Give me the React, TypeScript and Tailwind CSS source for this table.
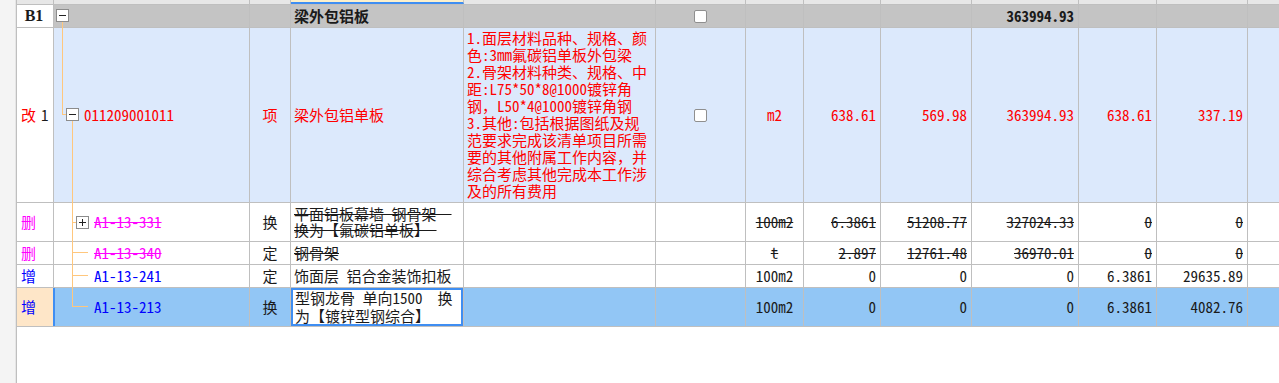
import React from 'react';
import clsx from 'clsx';

const W = [
  'w-[37px]',
  'w-[196px]',
  'w-[41px]',
  'w-[173px]',
  'w-[192px]',
  'w-[90px]',
  'w-[58px]',
  'w-[77px]',
  'w-[91px]',
  'w-[107px]',
  'w-[78px]',
  'w-[91px]',
  'w-[80px]',
];

function C({ i, className = '', children }: { i: number; className?: string; children?: React.ReactNode }) {
  return (
    <div className={clsx('relative shrink-0 h-full border-r border-[#bfbfbf] flex items-center', W[i], className)}>
      {children}
    </div>
  );
}

function Box({ plus = false, className = '' }: { plus?: boolean; className?: string }) {
  return (
    <span className={clsx('absolute w-[13px] h-[13px] border border-[#8c8c8c] bg-white', className)}>
      <span className="absolute left-[2px] top-[5px] w-[7px] h-px bg-[#222]" />
      {plus && <span className="absolute left-[5px] top-[2px] w-px h-[7px] bg-[#222]" />}
    </span>
  );
}

function Check() {
  return <span className="w-[13px] h-[13px] rounded-[2px] border border-[#8f8f8f] bg-white" />;
}

const line = 'absolute bg-[#ffc77d]';

function Num({ i, v, strike = false, className = '' }: { i: number; v: string; strike?: boolean; className?: string }) {
  return (
    <C i={i} className={clsx('justify-end pr-[4px]', className)}>
      <span className={clsx(strike && 'line-through')}>{v}</span>
    </C>
  );
}

function Rest({ from, vals, strike = false, className = '' }: { from: number; vals: string[]; strike?: boolean; className?: string }) {
  return (
    <>
      {vals.map((v, k) => (
        <Num key={k} i={from + k} v={v} strike={strike} className={className} />
      ))}
    </>
  );
}

export default function App() {
  return (
    <div className="flex h-[383px] w-full overflow-hidden bg-white text-[15px] text-[#1a1a1a] font-['Noto_Sans_Mono_CJK_SC','Noto_Sans_CJK_SC',monospace]">
      <div className="w-[16px] shrink-0 bg-[#f4f4f4] border-r border-[#e6e6e6]" />
      <div className="flex flex-col shrink-0 border-l border-[#bfbfbf]">
        {/* header stub */}
        <div className="flex h-[5px] border-b border-[#bfbfbf] bg-[#e7e7e7]">
          <C i={0} />
          <C i={1} />
          <C i={2} />
          <C i={3} className="bg-[#fcf0cc] border-b-2 border-b-[#3f8ef2]" />
          <C i={4} />
          <C i={5} />
          <C i={6} />
          <C i={7} />
          <C i={8} />
          <C i={9} />
          <C i={10} />
          <C i={11} />
          <C i={12} />
        </div>

        {/* B1 group */}
        <div className="flex h-[23px] border-b border-[#bfbfbf] bg-[#c4c4c4] font-bold">
          <C i={0} className="justify-center bg-white pr-[2px] text-[16px] font-['Liberation_Serif',serif]">B1</C>
          <C i={1}>
            <Box className="left-[2px] top-[4px]" />
            <span className={clsx(line, 'left-[8px] top-[17px] w-px h-[7px]')} />
          </C>
          <C i={2} />
          <C i={3} className="pl-[3px]">梁外包铝板</C>
          <C i={4} />
          <C i={5} className="justify-center">
            <Check />
          </C>
          <C i={6} />
          <C i={7} />
          <C i={8} />
          <Num i={9} v="363994.93" />
          <C i={10} />
          <C i={11} />
          <C i={12} />
        </div>

        {/* 改 1 */}
        <div className="flex h-[175px] border-b border-[#bfbfbf] bg-[#dce9fc] text-[#ff0000]">
          <C i={0} className="bg-white pl-[4px]">
            改<span className="ml-[5px] text-[#1a1a1a]">1</span>
          </C>
          <C i={1}>
            <span className={clsx(line, 'left-[8px] top-0 w-px h-[87px]')} />
            <span className={clsx(line, 'left-[8px] top-[86px] w-[4px] h-px')} />
            <Box className="left-[12px] top-[80px]" />
            <span className={clsx(line, 'left-[18px] top-[93px] w-px h-[82px]')} />
            <span className="pl-[30px]">011209001011</span>
          </C>
          <C i={2} className="justify-center">项</C>
          <C i={3} className="pl-[3px]">梁外包铝单板</C>
          <C i={4} className="items-start pl-[3px] pt-[1px] leading-[17px] whitespace-pre">
            {'1.面层材料品种、规格、颜\n色:3mm氟碳铝单板外包梁\n2.骨架材料种类、规格、中\n距:L75*50*8@1000镀锌角\n钢，L50*4@1000镀锌角钢\n3.其他:包括根据图纸及规\n范要求完成该清单项目所需\n要的其他附属工作内容，并\n综合考虑其他完成本工作涉\n及的所有费用'}
          </C>
          <C i={5} className="justify-center">
            <Check />
          </C>
          <C i={6} className="justify-center">m2</C>
          <Rest from={7} vals={['638.61', '569.98', '363994.93', '638.61', '337.19']} />
          <C i={12} />
        </div>

        {/* 删 A1-13-331 */}
        <div className="flex h-[39px] border-b border-[#bfbfbf]">
          <C i={0} className="pl-[4px] text-[#ff00ff]">删</C>
          <C i={1}>
            <span className={clsx(line, 'left-[18px] top-0 w-px h-[39px]')} />
            <span className={clsx(line, 'left-[18px] top-[19px] w-[4px] h-px')} />
            <Box plus className="left-[22px] top-[13px]" />
            <span className="pl-[40px] text-[#ff00ff] line-through">A1-13-331</span>
          </C>
          <C i={2} className="justify-center">换</C>
          <C i={3} className="pl-[3px] leading-[16px] whitespace-pre line-through">
            {'平面铝板幕墙 钢骨架  \n换为【氟碳铝单板】 '}
          </C>
          <C i={4} />
          <C i={5} />
          <C i={6} className="justify-center">
            <span className="line-through">100m2</span>
          </C>
          <Rest from={7} vals={['6.3861', '51208.77', '327024.33', '0', '0']} strike />
          <C i={12} />
        </div>

        {/* 删 A1-13-340 */}
        <div className="flex h-[23px] border-b border-[#bfbfbf]">
          <C i={0} className="pl-[4px] text-[#ff00ff]">删</C>
          <C i={1}>
            <span className={clsx(line, 'left-[18px] top-0 w-px h-[23px]')} />
            <span className={clsx(line, 'left-[18px] top-[10px] w-[16px] h-px')} />
            <span className="pl-[40px] text-[#ff00ff] line-through">A1-13-340</span>
          </C>
          <C i={2} className="justify-center">定</C>
          <C i={3} className="pl-[3px]">
            <span className="line-through">钢骨架</span>
          </C>
          <C i={4} />
          <C i={5} />
          <C i={6} className="justify-center">
            <span className="line-through">t</span>
          </C>
          <Rest from={7} vals={['2.897', '12761.48', '36970.01', '0', '0']} strike />
          <C i={12} />
        </div>

        {/* 增 A1-13-241 */}
        <div className="flex h-[23px] border-b border-[#bfbfbf]">
          <C i={0} className="pl-[4px] text-[#0000ff]">增</C>
          <C i={1}>
            <span className={clsx(line, 'left-[18px] top-0 w-px h-[23px]')} />
            <span className={clsx(line, 'left-[18px] top-[10px] w-[16px] h-px')} />
            <span className="pl-[40px] text-[#0000ff]">A1-13-241</span>
          </C>
          <C i={2} className="justify-center">定</C>
          <C i={3} className="pl-[3px] whitespace-pre">饰面层 铝合金装饰扣板</C>
          <C i={4} />
          <C i={5} />
          <C i={6} className="justify-center">100m2</C>
          <Rest from={7} vals={['0', '0', '0', '6.3861', '29635.89']} />
          <C i={12} />
        </div>

        {/* 增 A1-13-213 (selected) */}
        <div className="flex h-[39px] border-b border-[#bfbfbf] bg-[#92c6f5]">
          <C i={0} className="pl-[4px] text-[#0000ff] bg-[#fee6c8] border-r-[#3f8ef2]">增</C>
          <C i={1} className="shadow-[inset_1px_0_0_#3f8ef2]">
            <span className={clsx(line, 'left-[18px] top-0 w-px h-[18px]')} />
            <span className={clsx(line, 'left-[18px] top-[18px] w-[16px] h-px')} />
            <span className="pl-[40px] text-[#0000ff]">A1-13-213</span>
          </C>
          <C i={2} className="justify-center">换</C>
          <C i={3} className="pl-[4px] leading-[18px] whitespace-pre bg-white shadow-[inset_0_0_0_2px_#3f8ef2]">
            {'型钢龙骨 单向1500  换\n为【镀锌型钢综合】'}
          </C>
          <C i={4} />
          <C i={5} />
          <C i={6} className="justify-center">100m2</C>
          <Rest from={7} vals={['0', '0', '0', '6.3861', '4082.76']} />
          <C i={12} />
        </div>
      </div>
    </div>
  );
}
